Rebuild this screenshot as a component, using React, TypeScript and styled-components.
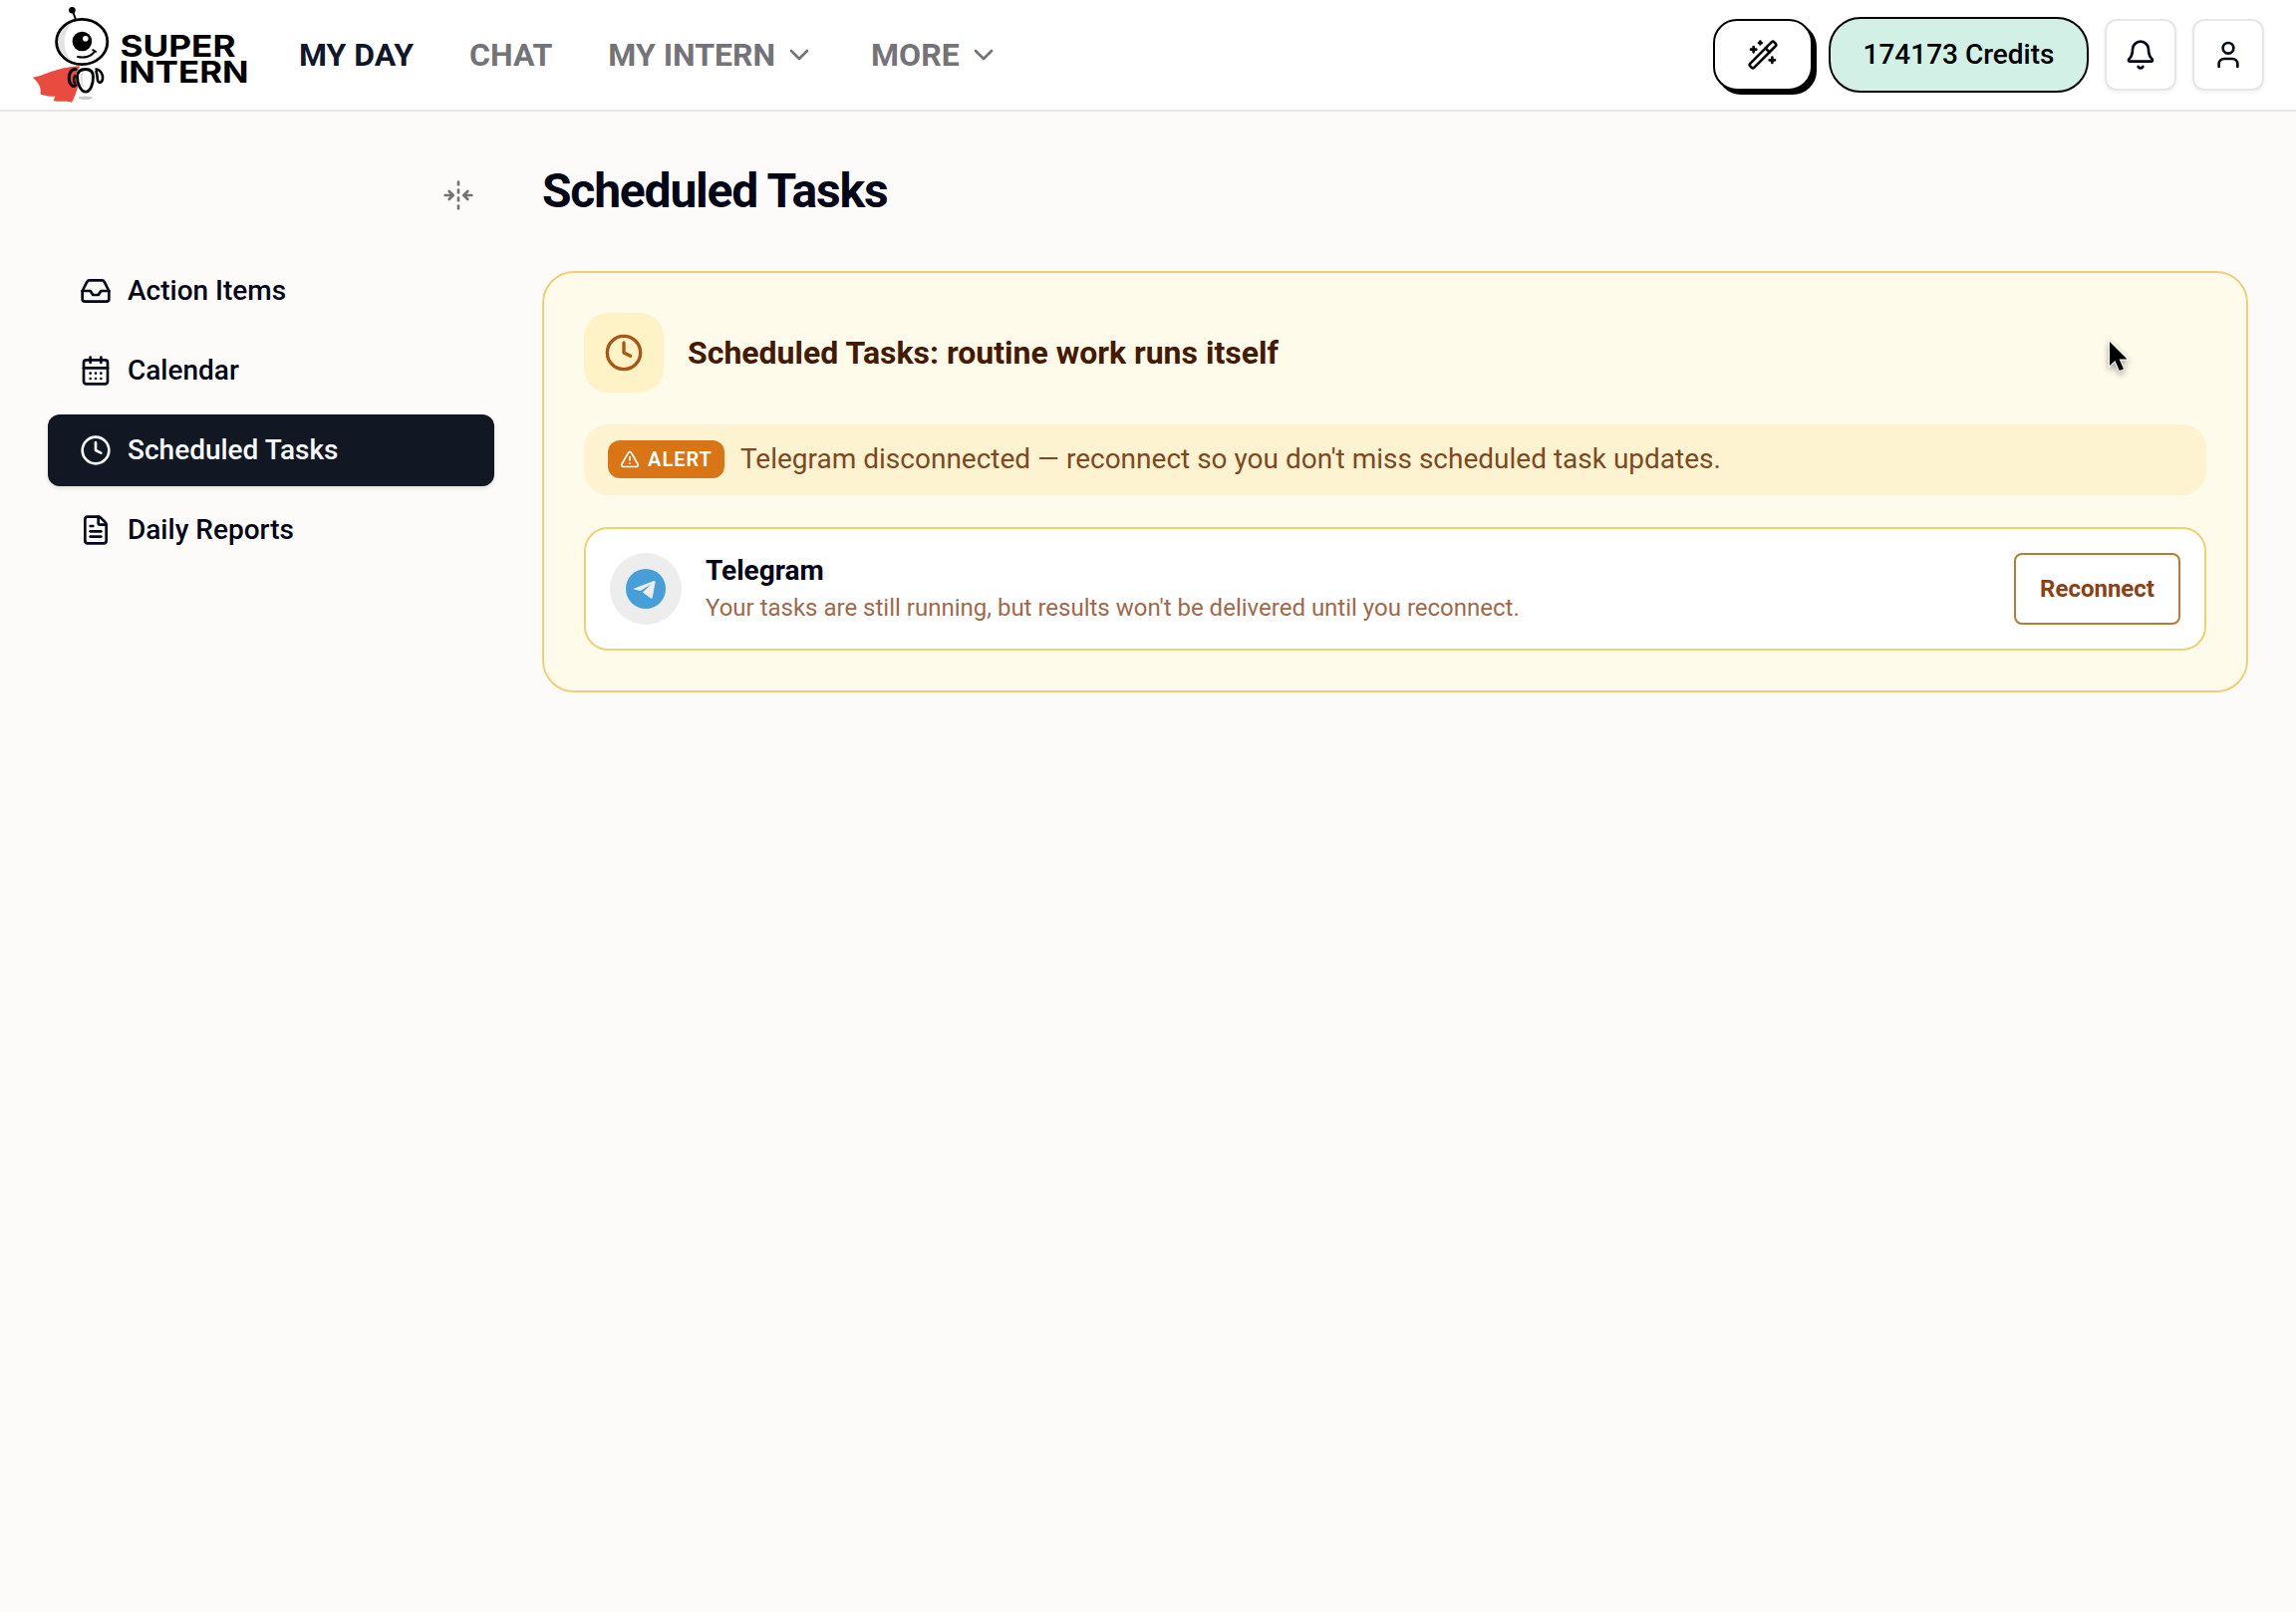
import React from "react";
import styled, { createGlobalStyle } from "styled-components";
import {
  Bell,
  CalendarDays,
  ChevronDown,
  Clock,
  FileText,
  FoldHorizontal,
  Inbox,
  TriangleAlert,
  User,
} from "lucide-react";

const GlobalStyle = createGlobalStyle`
  *, *::before, *::after { box-sizing: border-box; }
  body {
    margin: 0;
    background: #fcfbf9;
    color: #020617;
    font-family: Roboto, "Liberation Sans", sans-serif;
  }
  button { font-family: inherit; cursor: pointer; }
`;

const Page = styled.div`
  position: relative;
  min-height: 100vh;
  overflow: hidden;
`;

const Header = styled.header`
  display: flex;
  align-items: center;
  height: 112px;
  padding: 0 32px 0 30px;
  background: #fff;
  border-bottom: 2px solid #e5e5e5;
`;

const LogoLink = styled.a`
  display: flex;
  width: 220px;
  margin-right: 50px;
`;

const Nav = styled.nav`
  display: flex;
  align-items: center;
  gap: 56px;
  flex: 1;
`;

const NavLink = styled.a<{ $active?: boolean }>`
  display: flex;
  align-items: center;
  gap: 8px;
  font-size: 32px;
  font-weight: 700;
  line-height: 48px;
  color: ${(p) => (p.$active ? "#0f172a" : "#737378")};
`;

const HeaderActions = styled.div`
  display: flex;
  align-items: center;
  gap: 16px;
`;

const WandButton = styled.button`
  display: grid;
  place-items: center;
  width: 100px;
  height: 72px;
  padding: 0;
  background: #fff;
  color: #000;
  border: 2px solid #000;
  border-radius: 24px;
  box-shadow: 4px 4px 0 #000;
`;

const CreditsButton = styled.button`
  height: 76px;
  width: 261px;
  padding: 0;
  background: #d3f0e7;
  color: #000;
  border: 2px solid #000;
  border-radius: 32px;
  font-size: 28px;
  line-height: 40px;
  font-weight: 500;
`;

const SquareButton = styled.button`
  display: grid;
  place-items: center;
  width: 72px;
  height: 72px;
  padding: 0;
  background: #fff;
  color: #020617;
  border: 2px solid #e7e7e7;
  border-radius: 12px;
  box-shadow: 0 2px 4px rgba(0, 0, 0, 0.05);
`;

const Body = styled.div`
  display: flex;
  gap: 48px;
  padding: 48px 48px 0;
`;

const Sidebar = styled.aside`
  width: 448px;
  flex: none;
`;

const CollapseRow = styled.div`
  display: flex;
  justify-content: flex-end;
  align-items: center;
  height: 72px;
  padding-right: 20px;
  margin-bottom: 24px;
  color: #737373;
`;

const Menu = styled.nav`
  display: flex;
  flex-direction: column;
  gap: 8px;
`;

const MenuItem = styled.a<{ $active?: boolean }>`
  display: flex;
  align-items: center;
  gap: 16px;
  height: 72px;
  padding: 0 32px;
  border-radius: 12px;
  font-size: 28px;
  line-height: 40px;
  font-weight: 500;
  color: ${(p) => (p.$active ? "#f8fafc" : "#020617")};
  background: ${(p) => (p.$active ? "#111824" : "transparent")};
  box-shadow: ${(p) => (p.$active ? "0 2px 4px rgba(0, 0, 0, 0.12)" : "none")};
`;

const Main = styled.main`
  flex: 1;
  min-width: 0;
`;

const PageTitle = styled.h1`
  margin: 0 0 48px;
  height: 64px;
  font-size: 48px;
  line-height: 64px;
  font-weight: 700;
  letter-spacing: -1.2px;
`;

const Card = styled.section`
  display: flex;
  flex-direction: column;
  gap: 32px;
  padding: 40px;
  background: #fffbeb;
  border: 2px solid #edd078;
  border-radius: 32px;
`;

const CardHeader = styled.div`
  display: flex;
  align-items: center;
  gap: 24px;
`;

const ClockTile = styled.div`
  display: grid;
  place-items: center;
  width: 80px;
  height: 80px;
  border-radius: 24px;
  background: #fef3c7;
  color: #ab5614;
`;

const CardTitle = styled.h2`
  margin: 0;
  font-size: 32px;
  line-height: 40px;
  font-weight: 700;
  color: #451a03;
`;

const AlertBar = styled.div`
  display: flex;
  align-items: flex-start;
  gap: 16px;
  padding: 16px 24px;
  border-radius: 24px;
  background: #fdf3d1;
  font-size: 28px;
  line-height: 1.375;
`;

const AlertText = styled.span`
  color: #7f481f;
`;

const AlertBadge = styled.span`
  display: flex;
  align-items: center;
  justify-content: center;
  gap: 8px;
  width: 117px;
  height: 38px;
  border-radius: 12px;
  background: #d97514;
  color: #fff;
  font-size: 20px;
  line-height: 30px;
  font-weight: 600;
  letter-spacing: 1px;
`;

const Channel = styled.div`
  display: flex;
  align-items: center;
  gap: 24px;
  padding: 24px;
  background: #fff;
  border: 2px solid #ebd272;
  border-radius: 24px;
`;

const ChannelIcon = styled.div`
  display: grid;
  place-items: center;
  width: 72px;
  height: 72px;
  border-radius: 50%;
  background: #ededed;
`;

const ChannelInfo = styled.div`
  display: flex;
  flex-direction: column;
  gap: 4px;
  flex: 1;
`;

const ChannelName = styled.div`
  font-size: 28px;
  line-height: 35px;
  font-weight: 700;
`;

const ChannelNote = styled.div`
  font-size: 24px;
  line-height: 33px;
  color: #a0694a;
`;

const ReconnectButton = styled.button`
  height: 72px;
  width: 167px;
  padding: 0;
  background: #fff;
  color: #8a4116;
  border: 2px solid #b97a35;
  border-radius: 8px;
  font-size: 24px;
  line-height: 32px;
  font-weight: 700;
`;

const Pointer = styled.svg`
  position: absolute;
  left: 2111px;
  top: 336px;
  filter: drop-shadow(0 3px 3px rgba(0, 0, 0, 0.35));
`;

const Logo = () => (
  <svg width="220" height="102" viewBox="30 4 220 102" fill="none">
    <path
      d="M32.7 77.7C45 76 55 67.5 80.5 66.2L76 74L78 88C76 93 75 98 72 102.7C66 100.5 60 103 53.5 101L55.5 96.8C50 97 45 96 40.5 94.5C42 88 38 82 32.7 77.7Z"
      fill="#e94b41"
    />
    <ellipse cx="85.7" cy="98.3" rx="7" ry="1.8" fill="#c8c8c8" />
    <path d="M72.5 10L75.8 19" stroke="#000" strokeWidth="2" />
    <circle cx="72.4" cy="10.2" r="3.3" fill="#000" />
    <ellipse cx="82.2" cy="42" rx="25.6" ry="22.6" fill="#fff" />
    <path d="M76 20.5C52 26 52 57 74 63C62 52 60 32 76 20.5Z" fill="#e2e2e2" />
    <ellipse cx="82.2" cy="42" rx="25.6" ry="22.6" stroke="#000" strokeWidth="2.8" />
    <circle cx="82.4" cy="41.5" r="9.8" fill="#000" />
    <circle cx="85.8" cy="38.7" r="2.8" fill="#fff" />
    <path d="M78 57C85 58.5 92 56.5 95 51.5M93.2 50.2L96.2 51.8" stroke="#000" strokeWidth="2" strokeLinecap="round" />
    <path d="M76 69.5C71 69 68.5 75 69.3 80C70 85 73.5 88 76 85.5" stroke="#000" strokeWidth="3" strokeLinecap="round" />
    <path d="M76 75C73.5 78 73.5 82 75.5 84" stroke="#000" strokeWidth="2.4" />
    <path d="M96.5 69.5C101 70 103.5 75 103 79C102.3 83.5 99 84 98 80.5C97.5 77 97.5 74 96.5 72" stroke="#000" strokeWidth="2.6" strokeLinecap="round" />
    <path
      d="M86 69.5C80 69.5 77.5 72.5 77.5 77C77.5 84 81 91.8 86 92.2C91 91.8 93.5 84 93.5 77C93.5 72.5 91.5 69.5 86 69.5Z"
      fill="#fff"
      stroke="#000"
      strokeWidth="2.8"
    />
    <path d="M81 73C79 78 81 86 84.5 89.5C83 84 82.5 78 83.5 72Z" fill="#e2e2e2" />
    <g fill="#000" fontFamily="Inter, sans-serif" fontWeight="700" fontSize="30">
      <text x="120.5" y="57" textLength="116" lengthAdjust="spacingAndGlyphs">SUPER</text>
      <text x="119.5" y="83" textLength="130" lengthAdjust="spacingAndGlyphs">INTERN</text>
    </g>
  </svg>
);

const WandIcon = () => (
  <svg
    width="32"
    height="32"
    viewBox="0 0 24 24"
    fill="none"
    stroke="currentColor"
    strokeWidth="2"
    strokeLinecap="round"
    strokeLinejoin="round"
  >
    <path d="m21.64 3.64-1.28-1.28a1.21 1.21 0 0 0-1.72 0L2.36 18.64a1.21 1.21 0 0 0 0 1.72l1.28 1.28a1.2 1.2 0 0 0 1.72 0L21.64 5.36a1.2 1.2 0 0 0 0-1.72" />
    <path d="m14 7 3 3M5 6v4M19 14v4M10 2v2M7 8H3M21 16h-4M11 3H9" />
  </svg>
);

const TelegramIcon = () => (
  <svg width="40" height="40" viewBox="0 0 40 40">
    <circle cx="20" cy="20" r="20" fill="#479fd9" />
    <path
      d="M8 19.7L28.2 12C29.1 11.7 29.8 12.2 29.6 13.3L26.8 28.4C26.6 29.6 25.9 29.9 25 29.4L16.8 23.4L25.3 15.4L14.6 22L8.2 20.6C7.6 20.4 7.5 20 8 19.7Z"
      fill="#ededed"
    />
  </svg>
);

const menu = [
  { label: "Action Items", icon: Inbox },
  { label: "Calendar", icon: CalendarDays },
  { label: "Scheduled Tasks", icon: Clock, active: true },
  { label: "Daily Reports", icon: FileText },
];

export default function App() {
  return (
    <Page>
      <GlobalStyle />
      <Header>
        <LogoLink>
          <Logo />
        </LogoLink>
        <Nav>
          <NavLink $active>MY DAY</NavLink>
          <NavLink>CHAT</NavLink>
          <NavLink>
            MY INTERN <ChevronDown size={32} />
          </NavLink>
          <NavLink>
            MORE <ChevronDown size={32} />
          </NavLink>
        </Nav>
        <HeaderActions>
          <WandButton aria-label="Magic">
            <WandIcon />
          </WandButton>
          <CreditsButton>174173 Credits</CreditsButton>
          <SquareButton aria-label="Notifications">
            <Bell size={32} />
          </SquareButton>
          <SquareButton aria-label="Account">
            <User size={32} />
          </SquareButton>
        </HeaderActions>
      </Header>
      <Body>
        <Sidebar>
          <CollapseRow>
            <FoldHorizontal size={32} />
          </CollapseRow>
          <Menu>
            {menu.map(({ label, icon: Icon, active }) => (
              <MenuItem key={label} $active={active}>
                <Icon size={32} />
                {label}
              </MenuItem>
            ))}
          </Menu>
        </Sidebar>
        <Main>
          <PageTitle>Scheduled Tasks</PageTitle>
          <Card>
            <CardHeader>
              <ClockTile>
                <Clock size={40} />
              </ClockTile>
              <CardTitle>Scheduled Tasks: routine work runs itself</CardTitle>
            </CardHeader>
            <AlertBar>
              <AlertBadge>
                <TriangleAlert size={20} />
                ALERT
              </AlertBadge>
              <AlertText>
                Telegram disconnected — reconnect so you don't miss scheduled task updates.
              </AlertText>
            </AlertBar>
            <Channel>
              <ChannelIcon>
                <TelegramIcon />
              </ChannelIcon>
              <ChannelInfo>
                <ChannelName>Telegram</ChannelName>
                <ChannelNote>
                  Your tasks are still running, but results won't be delivered until you reconnect.
                </ChannelNote>
              </ChannelInfo>
              <ReconnectButton>Reconnect</ReconnectButton>
            </Channel>
          </Card>
        </Main>
      </Body>
      <Pointer width="32" height="44" viewBox="0 0 32 44">
        <path
          d="M6 7V31L11.3 26L15.8 36L20 34.2L15.7 24.5H23.5Z"
          fill="#000"
          stroke="#fff"
          strokeWidth="2"
          paintOrder="stroke"
        />
      </Pointer>
    </Page>
  );
}
